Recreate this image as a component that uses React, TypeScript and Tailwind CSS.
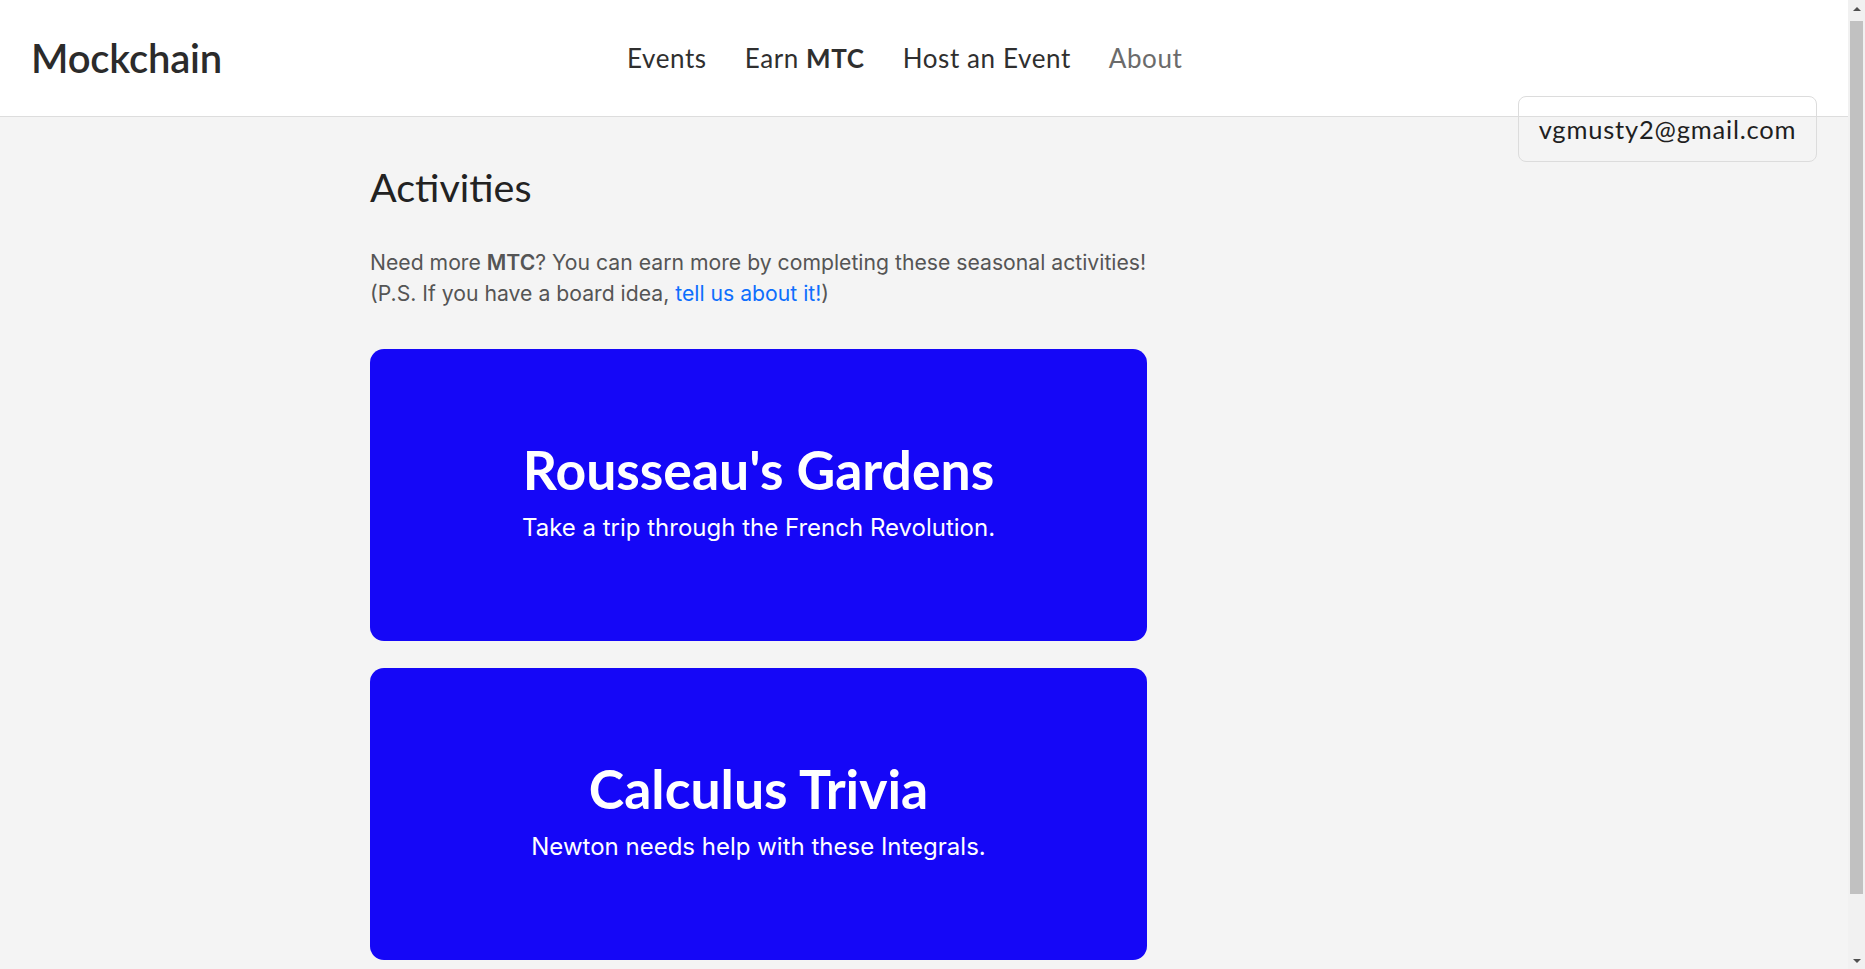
const display = "font-['Lato','Noto_Sans',sans-serif]"
const body = "font-['Inter','Noto_Sans',sans-serif]"

const activities = [
  { title: "Rousseau's Gardens", blurb: 'Take a trip through the French Revolution.' },
  { title: 'Calculus Trivia', blurb: 'Newton needs help with these Integrals.' },
]

// window scrollbar as seen in the capture
const Scrollbar = () => (
  <div className="w-[17px] shrink-0 bg-[#f1f1f1] flex flex-col items-center">
    <div className="h-[17px] flex items-center justify-center">
      <div className="w-0 h-0 border-x-[4px] border-x-transparent border-b-[4px] border-b-[#505050]" />
    </div>
    <div className="mt-[4px] h-[873px] w-[13px] bg-[#c1c1c1]" />
    <div className="flex-1" />
    <div className="h-[17px] flex items-center justify-center">
      <div className="w-0 h-0 border-x-[4px] border-x-transparent border-t-[4px] border-t-[#505050]" />
    </div>
  </div>
)

const App = () => {
  return (
    <div className="h-screen flex overflow-hidden">
      <div className="flex-1 min-w-0 overflow-hidden bg-[#f4f4f4] pb-[80px]">
        {/* Top bar */}
        <header className={`relative h-[117px] bg-white border-b border-[#dddddd] flex items-center px-[31px] ${display}`}>
          <a className="text-[40px] font-semibold text-[#2b2b2b] tracking-[-0.2px] leading-none">Mockchain</a>
          <nav className="ml-[405px] flex items-center gap-[38px] text-[26px] tracking-[0.6px] text-[#2f2f2f] leading-none">
            <a>Events</a>
            <a>
              Earn <span className="font-bold">MTC</span>
            </a>
            <a>Host an Event</a>
            <a className="text-[#6b6b6b]">About</a>
          </nav>
          <div className="absolute top-[96px] right-[31px] w-[299px] h-[66px] rounded-[8px] border border-[#dcdcdc] flex items-center justify-center text-[25.5px] text-[#1f1f1f] tracking-[0.8px]">
            vgmusty2@gmail.com
          </div>
        </header>

        <main className="ml-[370px] w-[777px] pt-[50px]">
          <h1 className={`text-[39.5px] text-[#222] leading-none ${display}`}>Activities</h1>
          <p className={`mt-[40px] text-[21.2px] leading-[31px] text-[#555] ${body}`}>
            Need more <span className="font-semibold">MTC</span>? You can earn more by completing these seasonal
            activities!
            <br />
            (P.S. If you have a board idea, <a className="text-[#0d6efd]">tell us about it!</a>)
          </p>

          <div className="mt-[40px] flex flex-col gap-[27px]">
            {activities.map((a) => (
              <div
                key={a.title}
                className="h-[292px] shrink-0 rounded-[14px] bg-[#1507f7] text-white flex flex-col items-center justify-center pb-[6px]"
              >
                <h2 className={`text-[53.5px] font-bold leading-none ${display}`}>{a.title}</h2>
                <p className={`mt-[20px] text-[24px] leading-none ${body}`}>{a.blurb}</p>
              </div>
            ))}
          </div>
        </main>
      </div>
      <Scrollbar />
    </div>
  )
}

export default App
